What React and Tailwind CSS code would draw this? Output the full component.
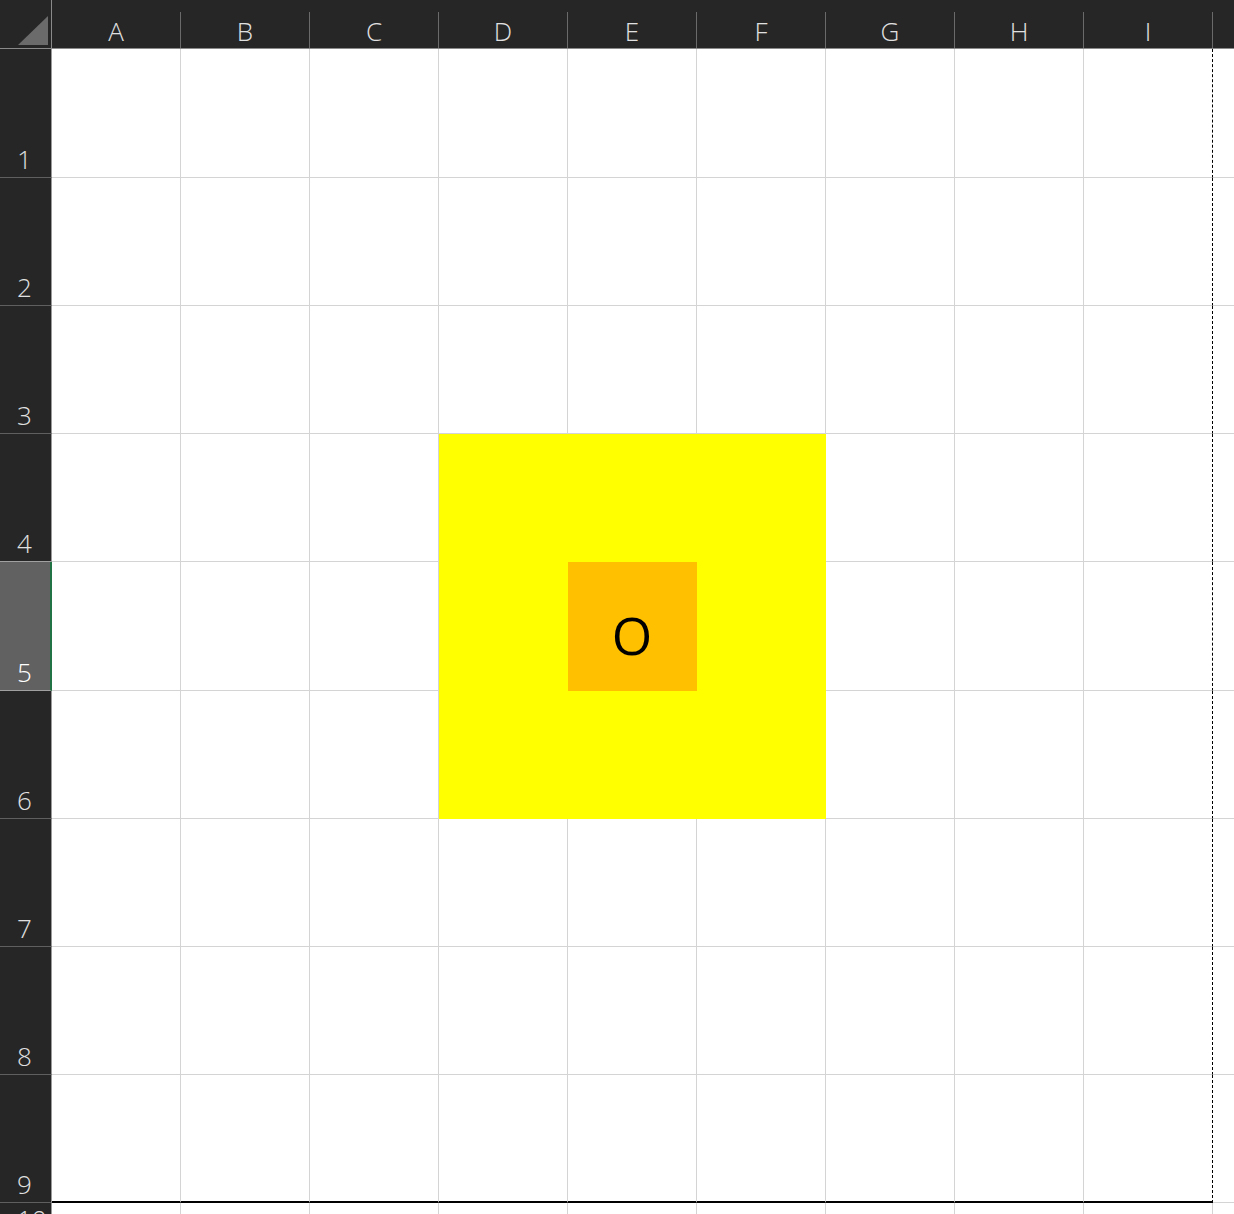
import React from 'react';

const cols = ['A', 'B', 'C', 'D', 'E', 'F', 'G', 'H', 'I'];
const rows = [1, 2, 3, 4, 5, 6, 7, 8, 9, 10];

const yellow = { D: [4, 5, 6], E: [4, 6], F: [4, 5, 6] };

const cellClass = (col, row) => {
  if (col === 'E' && row === 5) return 'bg-[#ffc000] border-[#ffc000]';
  if (yellow[col] && yellow[col].includes(row)) return 'bg-[#ffff00] border-[#ffff00]';
  return 'bg-white border-[#d4d4d4]';
};

const Cell = ({ col, row }) => {
  let cls = 'border-r border-b ' + cellClass(col, row);
  if (row === 9) cls += ' !border-b-2 !border-b-black';
  if (col === 'I' && row <= 9) cls += ' !border-r-black [border-right-style:dashed]';
  return (
    <div className={cls + ' flex items-center justify-center'}>
      {col === 'E' && row === 5 && (
        <span className="text-[52px] leading-none text-black mt-[18px]">O</span>
      )}
    </div>
  );
};

const App = () => {
  return (
    <div
      className="w-[1234px] h-[1214px] overflow-hidden bg-white grid grid-cols-[52px_repeat(9,129px)_1fr] grid-rows-[49px_129px_128px_128px_128px_129px_128px_128px_128px_128px_1fr]"
      style={{ fontFamily: '"Open Sans", "Noto Sans", sans-serif' }}
    >
      {/* corner */}
      <div className="bg-[#262626] border-r border-b border-[#8a8a8a] flex items-end justify-end pr-[3px] pb-[3px]">
        <svg width="30" height="29" viewBox="0 0 30 29">
          <polygon points="30,0 30,29 0,29" fill="#6b6b6b" />
        </svg>
      </div>
      {cols.map((c) => (
        <div key={c} className="bg-[#262626] border-b border-[#8a8a8a] flex flex-col">
          <div className="h-3" />
          <div className="flex-1 border-r border-[#6a6a6a] flex items-center justify-center pt-[2px] text-[26px] font-light text-[#e0e0e0] leading-none">
            {c}
          </div>
        </div>
      ))}
      <div className="bg-[#262626] border-b border-[#8a8a8a]" />

      {rows.map((r) => (
        <React.Fragment key={r}>
          <div
            className={
              'flex pl-[17px] text-[26px] font-light leading-none ' +
              (r === 10 ? 'items-start pt-[3px] ' : 'items-end pb-[5px] ') +
              (r === 5
                ? 'bg-[#616161] border-b border-[#a0a0a0] border-r-2 border-r-[#217346] text-white'
                : 'bg-[#262626] border-b border-[#5f5f5f] border-r border-r-[#9a9a9a] text-[#e0e0e0]') +
              (r === 4 ? ' !border-b-[#a0a0a0]' : '')
            }
          >
            {r}
          </div>
          {cols.map((c) => (
            <Cell key={c} col={c} row={r} />
          ))}
          <div className="bg-white border-b border-[#d4d4d4]" />
        </React.Fragment>
      ))}
    </div>
  );
};

export default App;
